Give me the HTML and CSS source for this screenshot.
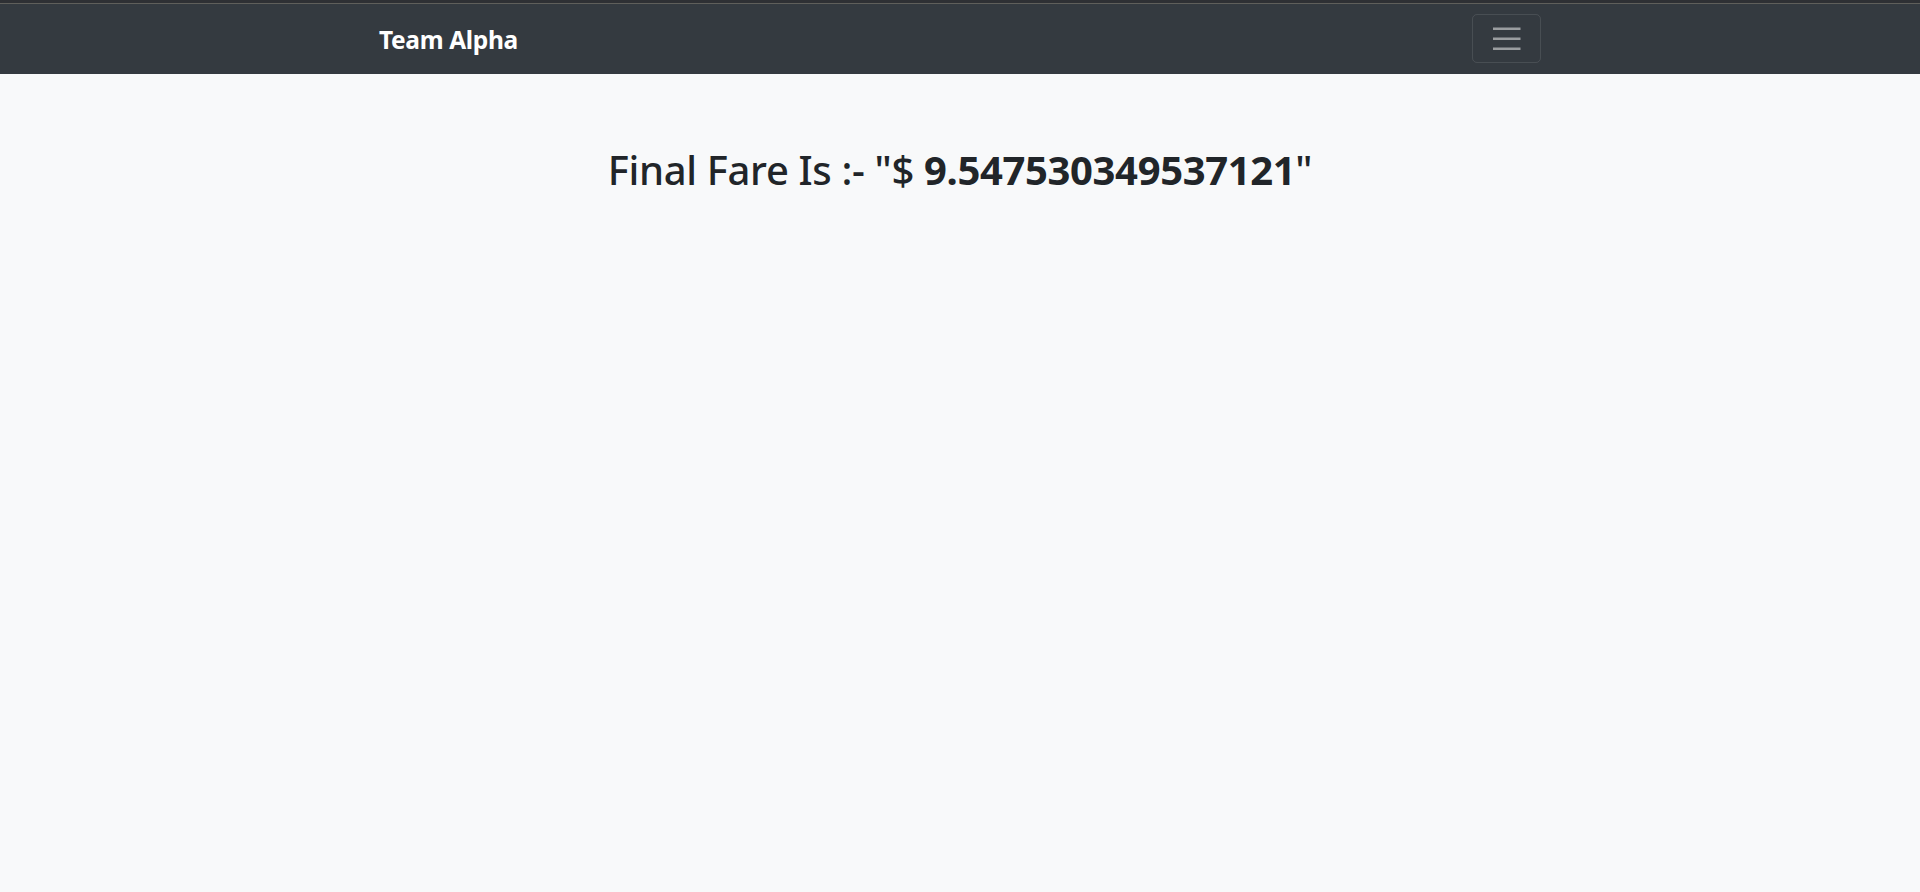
FILE: index.html
```html
<!DOCTYPE html>
<html lang="en">
<head>
<meta charset="utf-8">
<title>Team Alpha</title>
<link rel="stylesheet" href="styles.css">
</head>
<body>
<div class="topstrip"></div>
<nav class="navbar">
  <div class="navbar-inner">
    <a class="brand" href="#">Team Alpha</a>
    <button class="toggler" type="button" aria-label="Toggle navigation">
      <svg class="toggler-icon" viewBox="0 0 30 30" width="37.5" height="37.5" aria-hidden="true">
        <path d="M4 7h22M4 15h22M4 23h22" stroke="rgba(255,255,255,0.5)" stroke-width="2" stroke-linecap="butt" fill="none"/>
      </svg>
    </button>
  </div>
</nav>
<main class="content">
  <h2 class="fare">Final Fare Is :- "$ <strong>9.547530349537121</strong>"</h2>
</main>
</body>
</html>
```

FILE: styles.css
```css
html, body {
  margin: 0;
  padding: 0;
}
body {
  background: #f8f9fa;
  color: #212529;
  font-family: "Noto Sans", "Open Sans", "DejaVu Sans", sans-serif;
  min-height: 892px;
}
.topstrip {
  height: 3px;
  background: #2e3034;
  border-bottom: 1px solid #5f5f5b;
}
.navbar {
  background: #343a40;
  padding: 10px 0 11px;
}
.navbar-inner {
  width: 1162px;
  margin: 0 auto;
  display: flex;
  align-items: center;
  justify-content: space-between;
}
.brand {
  color: #fff;
  text-decoration: none;
  font-weight: 700;
  font-size: 24.5px;
  line-height: 30px;
  letter-spacing: -0.35px;
  padding-top: 2px;
}
.toggler {
  width: 69px;
  height: 49px;
  padding: 0;
  background: transparent;
  border: 1px solid rgba(255, 255, 255, 0.1);
  border-radius: 5px;
  display: flex;
  align-items: center;
  justify-content: center;
}
.toggler-icon {
  display: block;
}
.content {
  padding-top: 72px;
  text-align: center;
}
.fare {
  margin: 0;
  font-size: 40px;
  font-weight: 500;
  line-height: 48px;
  letter-spacing: -0.35px;
}
.fare strong {
  font-weight: 700;
}
```
